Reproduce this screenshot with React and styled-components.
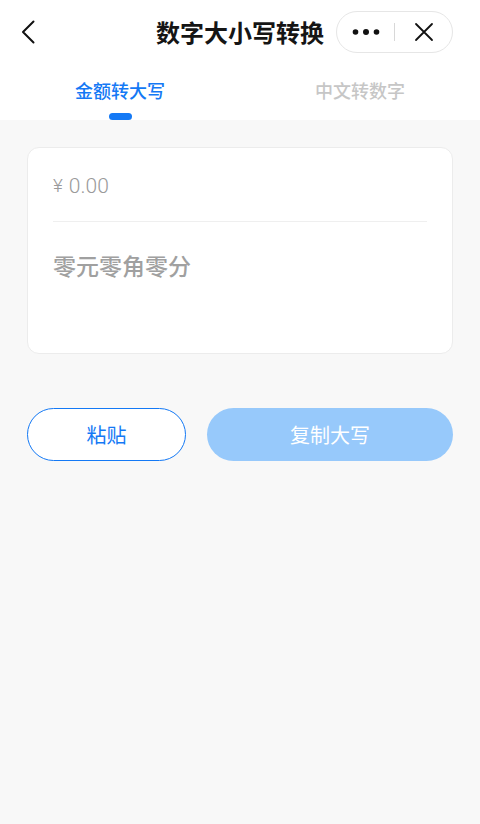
import React from "react";
import styled, { createGlobalStyle } from "styled-components";

const Global = createGlobalStyle`
  html, body { margin: 0; padding: 0; }
  body {
    background: #f8f8f8;
    font-family: "Noto Sans CJK SC", "Noto Sans", sans-serif;
  }
`;

const Page = styled.div`
  width: 480px;
  min-height: 824px;
  background: #f8f8f8;
  display: flex;
  flex-direction: column;
`;

const Top = styled.div`
  background: #ffffff;
`;

const NavBar = styled.div`
  position: relative;
  height: 64px;
  display: flex;
  align-items: center;
  justify-content: space-between;
  padding: 0 27px 0 16px;
`;

const BackBtn = styled.div`
  width: 24px;
  height: 30px;
  display: flex;
  align-items: center;
  justify-content: center;
`;

const Title = styled.div`
  position: absolute;
  left: 0;
  right: 0;
  top: 0;
  height: 64px;
  line-height: 64px;
  text-align: center;
  font-size: 24px;
  font-weight: 700;
  color: #151515;
  pointer-events: none;
`;

const Capsule = styled.div`
  position: relative;
  z-index: 1;
  width: 117px;
  height: 42px;
  box-sizing: border-box;
  border: 1px solid #e6e6e6;
  border-radius: 21px;
  display: flex;
  align-items: center;
  background: #fff;
`;

const CapHalf = styled.div`
  flex: 1;
  display: flex;
  align-items: center;
  justify-content: center;
`;

const CapDivider = styled.div`
  width: 1px;
  height: 18px;
  background: #d8d8d8;
`;

const Tabs = styled.div`
  height: 56px;
  display: flex;
`;

const Tab = styled.div`
  flex: 1;
  display: flex;
  flex-direction: column;
  align-items: center;
  padding-top: 14px;
  font-size: 18px;
  font-weight: 500;
  line-height: 24px;
  color: ${(p) => (p.$active ? "#1479f5" : "#c6c6c6")};
`;

const Indicator = styled.div`
  margin-top: 11px;
  width: 23px;
  height: 7px;
  border-radius: 4px;
  background: ${(p) => (p.$active ? "#1479f5" : "transparent")};
`;

const Card = styled.div`
  margin: 27px 27px 0;
  height: 207px;
  box-sizing: border-box;
  background: #fff;
  border: 1px solid #ececec;
  border-radius: 12px;
  padding: 0 25px;
  display: flex;
  flex-direction: column;
`;

const Amount = styled.div`
  height: 74px;
  display: flex;
  align-items: center;
  padding-top: 2px;
  box-sizing: border-box;
  font-family: Roboto, "Noto Sans", sans-serif;
  font-size: 21px;
  font-weight: 300;
  color: #9a9a9a;
  border-bottom: 1px solid #efefef;
`;

const Yen = styled.span`
  font-size: 19px;
  margin-right: 6px;
`;

const Result = styled.div`
  padding-top: 28px;
  font-size: 23px;
  line-height: 30px;
  font-weight: 500;
  color: #a0a0a0;
`;

const Buttons = styled.div`
  display: flex;
  gap: 21px;
  margin: 54px 27px 0;
`;

const Btn = styled.div`
  height: 53px;
  box-sizing: border-box;
  border-radius: 27px;
  display: flex;
  align-items: center;
  justify-content: center;
  font-size: 20px;
  font-weight: 400;
  ${(p) =>
    p.$primary
      ? `flex: 1; background: #97c9fb; color: #fff;`
      : `width: 159px; border: 1.5px solid #1479f5; color: #1479f5; background: #fff;`}
`;

export default function App() {
  return (
    <>
      <Global />
      <Page>
        <Top>
          <NavBar>
            <BackBtn>
              <svg width="14" height="24" viewBox="0 0 14 24">
                <path d="M12.5 1.5 L2 12 L12.5 22.5" fill="none" stroke="#111" strokeWidth="2" strokeLinecap="round" strokeLinejoin="round" />
              </svg>
            </BackBtn>
            <Title>数字大小写转换</Title>
            <Capsule>
              <CapHalf>
                <svg width="28" height="8" viewBox="0 0 28 8">
                  <circle cx="3.5" cy="4" r="2.8" fill="#111" />
                  <circle cx="14" cy="4" r="3" fill="#111" />
                  <circle cx="24.5" cy="4" r="2.8" fill="#111" />
                </svg>
              </CapHalf>
              <CapDivider />
              <CapHalf>
                <svg width="20" height="20" viewBox="0 0 20 20">
                  <path d="M2 2 L18 18 M18 2 L2 18" stroke="#111" strokeWidth="1.8" strokeLinecap="round" />
                </svg>
              </CapHalf>
            </Capsule>
          </NavBar>
          <Tabs>
            <Tab $active>
              金额转大写
              <Indicator $active />
            </Tab>
            <Tab>
              中文转数字
              <Indicator />
            </Tab>
          </Tabs>
        </Top>
        <Card>
          <Amount>
            <Yen>¥</Yen>0.00
          </Amount>
          <Result>零元零角零分</Result>
        </Card>
        <Buttons>
          <Btn>粘贴</Btn>
          <Btn $primary>复制大写</Btn>
        </Buttons>
      </Page>
    </>
  );
}
